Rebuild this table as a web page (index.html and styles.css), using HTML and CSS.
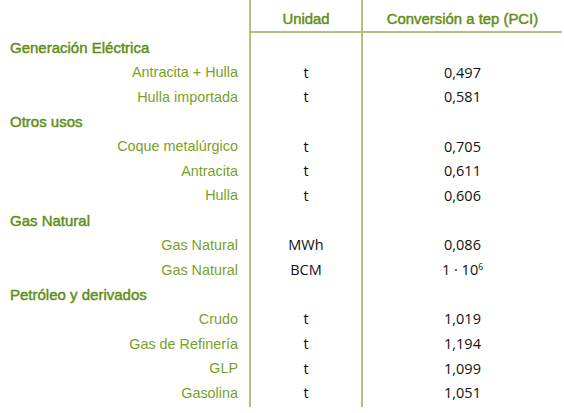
FILE: index.html
```html
<!DOCTYPE html>
<html lang="es">
<head>
<meta charset="utf-8">
<link rel="stylesheet" href="styles.css">
</head>
<body>
<table class="conv">
  <colgroup>
    <col class="c-label">
    <col class="c-unit">
    <col class="c-val">
  </colgroup>
  <thead>
    <tr class="head">
      <th class="blank"></th>
      <th class="h-unit">Unidad</th>
      <th class="h-val">Conversión a tep (PCI)</th>
    </tr>
  </thead>
  <tbody>
    <tr class="group first"><td class="grp">Generación Eléctrica</td><td class="unit"></td><td class="val"></td></tr>
    <tr><td class="item">Antracita + Hulla</td><td class="unit">t</td><td class="val">0,497</td></tr>
    <tr><td class="item">Hulla importada</td><td class="unit">t</td><td class="val">0,581</td></tr>
    <tr class="group"><td class="grp">Otros usos</td><td class="unit"></td><td class="val"></td></tr>
    <tr><td class="item">Coque metalúrgico</td><td class="unit">t</td><td class="val">0,705</td></tr>
    <tr><td class="item">Antracita</td><td class="unit">t</td><td class="val">0,611</td></tr>
    <tr><td class="item">Hulla</td><td class="unit">t</td><td class="val">0,606</td></tr>
    <tr class="group"><td class="grp">Gas Natural</td><td class="unit"></td><td class="val"></td></tr>
    <tr><td class="item">Gas Natural</td><td class="unit">MWh</td><td class="val">0,086</td></tr>
    <tr><td class="item">Gas Natural</td><td class="unit">BCM</td><td class="val">1 · 10<sup>6</sup></td></tr>
    <tr class="group"><td class="grp">Petróleo y derivados</td><td class="unit"></td><td class="val"></td></tr>
    <tr><td class="item">Crudo</td><td class="unit">t</td><td class="val">1,019</td></tr>
    <tr><td class="item">Gas de Refinería</td><td class="unit">t</td><td class="val">1,194</td></tr>
    <tr><td class="item">GLP</td><td class="unit">t</td><td class="val">1,099</td></tr>
    <tr class="last"><td class="item">Gasolina</td><td class="unit">t</td><td class="val">1,051</td></tr>
  </tbody>
</table>
</body>
</html>
```
FILE: styles.css
```css
html, body {
  margin: 0;
  padding: 0;
  background: #ffffff;
}

.conv {
  border-collapse: separate;
  border-spacing: 0;
  width: 562px;
  table-layout: fixed;
  font-family: "Liberation Sans", Arial, sans-serif;
  font-size: 14px;
}

.c-label { width: 249px; }
.c-unit { width: 112px; }
.c-val { width: 201px; }

.conv th, .conv td {
  padding: 0;
}

.head th {
  height: 24px;
  padding-top: 7px;
  font-weight: normal;
  -webkit-text-stroke: 0.45px currentColor;
  color: #608d14;
  font-size: 14.9px;
  text-align: center;
  vertical-align: middle;
}

.head .h-unit, .head .h-val {
  border-bottom: 2px solid #b0c482;
}

.h-unit, .unit {
  border-left: 2px solid #b0c482;
}

.h-val, .val {
  border-left: 2px solid #b0c482;
}

.conv tbody td {
  height: 24.7px;
  vertical-align: middle;
}

.conv tbody tr.first td {
  padding-top: 2px;
}

.conv tbody tr.last td {
  padding-bottom: 2px;
}

.grp {
  font-weight: normal;
  -webkit-text-stroke: 0.45px currentColor;
  font-size: 15px;
  color: #608d14;
  padding-left: 10px !important;
  text-align: left;
  white-space: nowrap;
}

.item {
  color: #7a9f28;
  font-size: 14.4px;
  text-align: right;
  padding-right: 11px !important;
  white-space: nowrap;
}

.unit, .val {
  text-align: center;
  color: #111111;
  font-family: "Open Sans", "Noto Sans", sans-serif;
  font-size: 14.5px;
}

.val sup {
  font-size: 8.5px;
  vertical-align: 5px;
  line-height: 0;
}
```
